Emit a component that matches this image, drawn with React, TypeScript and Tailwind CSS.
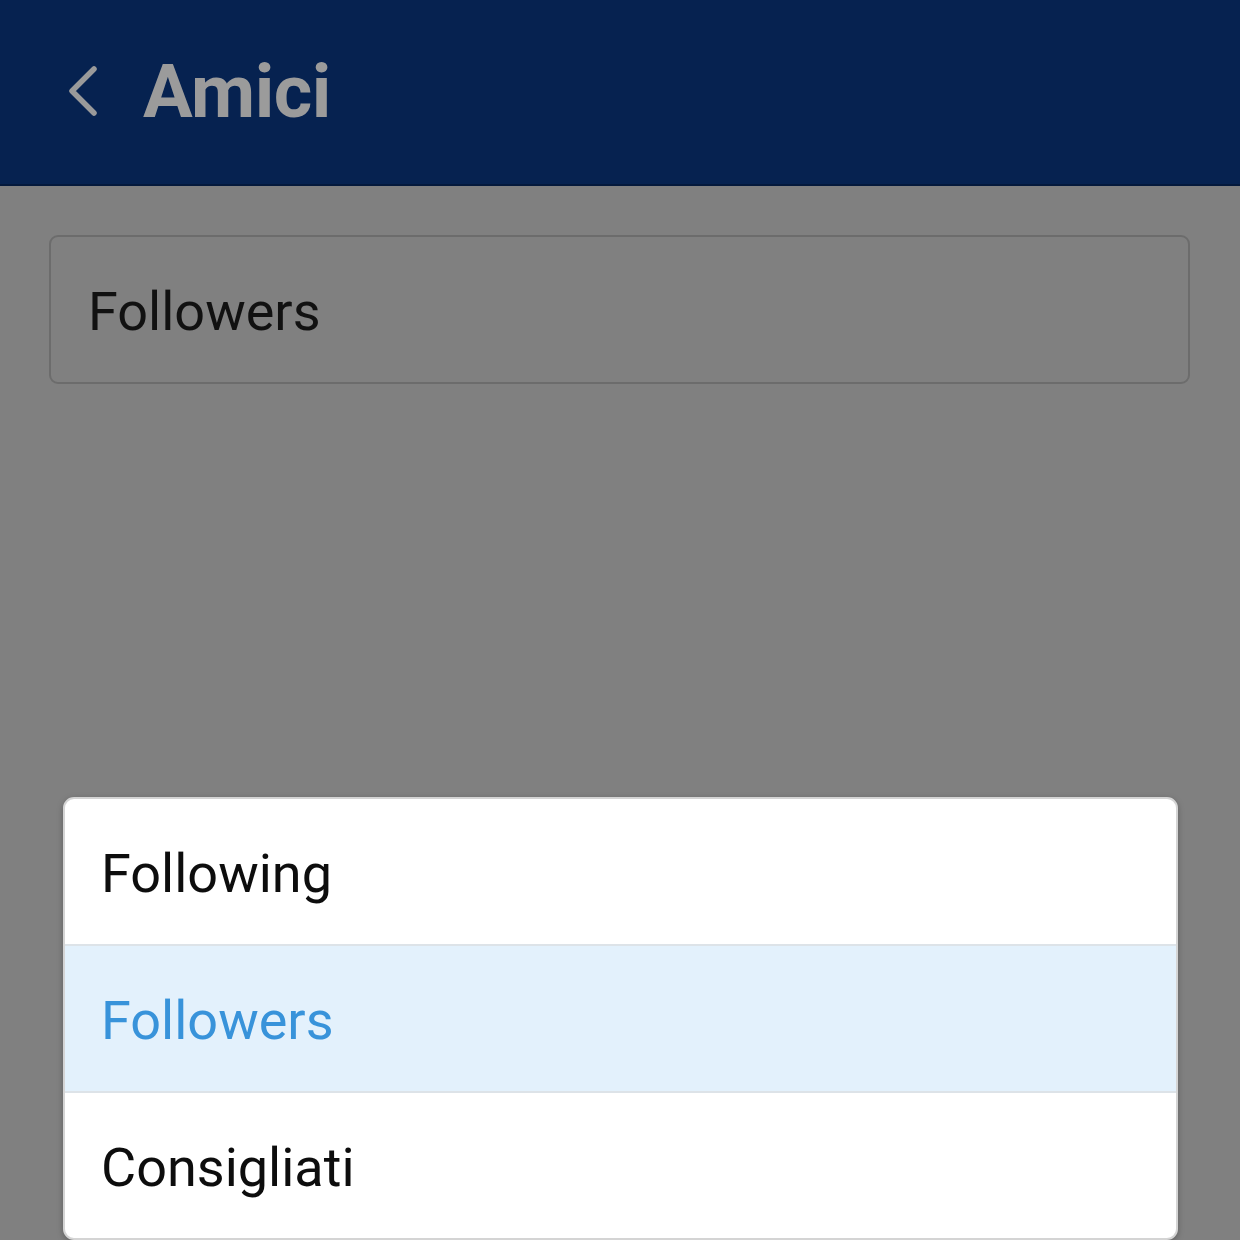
const options = ["Following", "Followers", "Consigliati"];

export default function App() {
  const selected = "Followers";

  return (
    <div
      className="relative w-[1240px] h-[1240px] overflow-hidden bg-[#808080]"
      style={{ fontFamily: "Roboto, 'Noto Sans', sans-serif" }}
    >
      {/* Header */}
      <header className="h-[186px] bg-[#062250] border-b-2 border-[#04193c] flex items-center pl-[67px]">
        <svg width="32" height="52" viewBox="0 0 32 52" fill="none" className="mt-[-2px]">
          <polyline
            points="27,4 5,26 27,48"
            stroke="#9a9a9a"
            strokeWidth="5.5"
            strokeLinecap="round"
            strokeLinejoin="round"
          />
        </svg>
        <h1 className="ml-[44px] text-[74px] font-bold text-[#9b9b9b] leading-none tracking-[-0.5px]">
          Amici
        </h1>
      </header>

      {/* Select field */}
      <div className="pl-[49px] pt-[49px] pr-[50px]">
        <div className="h-[149px] rounded-[9px] border-2 border-[#6c6c6c] flex items-center pl-[37px] pt-[4px]">
          <span className="text-[54px] text-[#111] leading-none">{selected}</span>
        </div>
      </div>

      {/* Dropdown menu */}
      <div className="absolute left-[63px] top-[797px] w-[1115px] rounded-[11px] bg-white overflow-hidden border-2 border-[#d4d4d4] shadow-[0_2px_6px_rgba(0,0,0,0.25)]">
        {options.map((o, i) => (
          <div
            key={o}
            className={`flex items-center pl-[36px] pt-[5px] ${
              i > 0 ? "h-[147px] border-t-2 border-[#dde3e8]" : "h-[145px]"
            } ${o === selected ? "bg-[#e3f1fc] text-[#3893da]" : "text-[#0d0d0d]"}`}
          >
            <span className="text-[54px] leading-none">{o}</span>
          </div>
        ))}
      </div>
    </div>
  );
}
